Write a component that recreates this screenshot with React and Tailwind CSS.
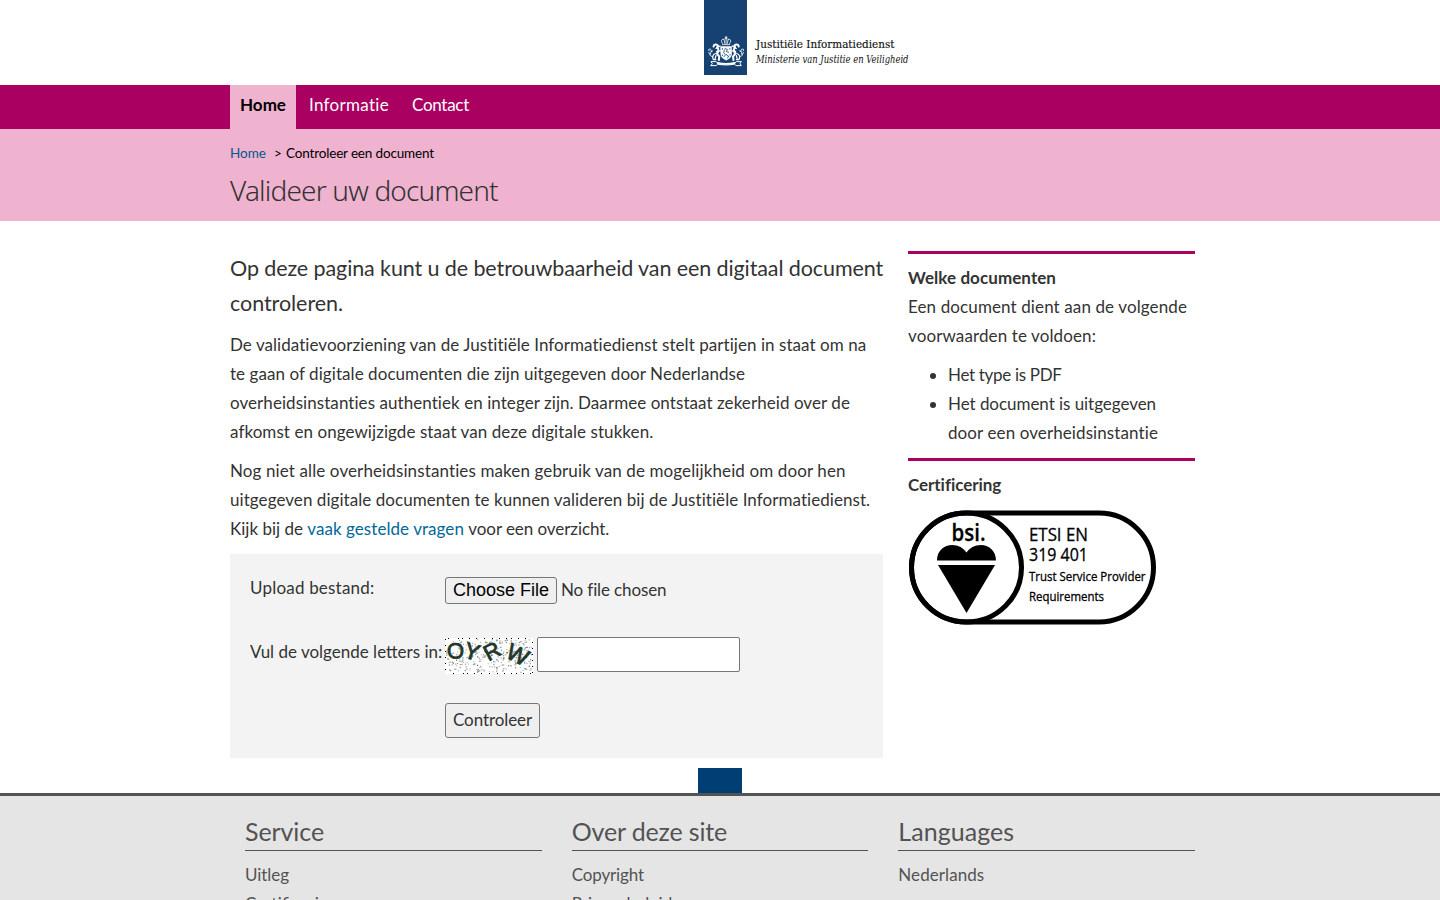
function Crest() {
  return (
    <g fill="none" stroke="#fff" strokeLinecap="round" strokeLinejoin="round">
      {/* crown */}
      <path d="M18.5 44.6h7.2M18.6 43.6c-2.6-3.2-.4-5 1.6-4.2 .2-1.2 3.4-1.2 3.7 0 2-.8 4.2 1 1.7 4.2M22.1 39v4.4M20.2 40l.6 3.4M24 40l-.6 3.4" strokeWidth=".8" />
      <path d="M22.1 36.4v2.2M21.2 37.3h1.8" strokeWidth=".8" />
      {/* shield */}
      <path d="M16.8 46.6h10.8v7.2c0 3.4-2.6 5-5.4 6.4-2.8-1.4-5.4-3-5.4-6.4z" fill="#fff" strokeWidth=".6" />
      <path d="M21 48.5l2.6 1-1.4 2 2.4.8M20.5 49.800l-.8 3 1.8 2-1.5 2M22.2 54.600l2.3 1.4-.8 2M18.4 48.4v1M25.8 48.4v.8M18.5 55v.6M26 54.5v.6" stroke="#154273" strokeWidth=".8" />
      {/* lions */}
      {[false, true].map((flip) => (
        <g key={String(flip)} transform={flip ? "translate(44.3 0) scale(-1 1)" : undefined}>
          <path d="M9.5 46.5c.4-2.4 3.4-2.5 4.5-.8l-.8 1.8c2 1.6 1.4 4.6-.4 5.8l2.5 3.4-.5 3.3" strokeWidth="2" />
          <path d="M12 48.5l4-2.6M12.6 51.4l3.8-.6M11.6 53.5c-3 .8-3.6 3.6-2.2 6.2h2.4M12 55.5l-1 3.5" strokeWidth="1.2" />
          <path d="M8.8 56.5c-2.6.2-3.6-2-2.2-3.8s.8-3-.4-3.6c-1.600-.6-2 1-1.100 1.900M6.800 54c-1 .3-1.900-.3-2-1.300M7.200 51.600l1.400-.7" strokeWidth=".9" />
        </g>
      ))}
      {/* ribbon */}
      <path d="M7 65.600h5.200l1.500-1.400c5.600 1 11.200 1 16.900 0l1.500 1.400h5.200l-1.300-2 1.300-2h-4.700l-1.500 1M7 65.600l1.300-2-1.300-2h4.700l1.500 1" strokeWidth="1" />
      <path d="M13.700 63c5.600 1.200 11.200 1.200 16.900 0" strokeWidth="1.800" />
    </g>
  );
}

function Logo() {
  return (
    <svg width="220" height="75" viewBox="0 0 220 75" aria-label="Justitiële Informatiedienst">
      <rect width="43" height="75" fill="#154273" />
      <Crest />
      <text x="52" y="48.300" textLength="138.500" lengthAdjust="spacingAndGlyphs" fill="#111" stroke="#111" strokeWidth=".15" className="font-['DejaVu_Serif',serif] text-[11.500px]">Justitiële Informatiedienst</text>
      <text x="52" y="63" textLength="152.500" lengthAdjust="spacingAndGlyphs" fill="#111" className="font-['DejaVu_Serif',serif] text-[11.500px] italic">Ministerie van Justitie en Veiligheid</text>
    </svg>
  );
}

function BsiMark() {
  const label = "font-['Open_Sans',sans-serif]";
  return (
    <svg width="249" height="115" viewBox="0 0 249 115" className="block">
      <g fill="none" stroke="#000" strokeWidth="5">
        <rect x="3.500" y="3" width="242" height="109" rx="54.500" />
        <ellipse cx="58.500" cy="57.500" rx="55" ry="54.500" />
      </g>
      <path d="M29 50.500c0-10 7.500-15.500 15-15.500 6.500 0 11.500 3 14.500 7.500C61.500 38 66.500 35 73 35c7.500 0 15 5.500 15 15.500z" />
      <path d="M30 55h57l-28.500 48z" />
      <g stroke="#000">
        <text x="43.500" y="31" textLength="34" lengthAdjust="spacingAndGlyphs" strokeWidth=".3" className="font-['Open_Sans',sans-serif] text-[24px] font-semibold">bsi.</text>
        <g strokeWidth=".3">
          <text x="121" y="31" textLength="59" lengthAdjust="spacingAndGlyphs" className={label + " text-[18px]"}>ETSI EN</text>
          <text x="121" y="50.500" textLength="59" lengthAdjust="spacingAndGlyphs" className={label + " text-[18px]"}>319 401</text>
          <text x="121" y="70.500" textLength="116.500" lengthAdjust="spacingAndGlyphs" className={label + " text-[12.500px]"}>Trust Service Provider</text>
          <text x="121" y="90.500" textLength="75" lengthAdjust="spacingAndGlyphs" className={label + " text-[12.500px]"}>Requirements</text>
        </g>
      </g>
    </svg>
  );
}

// Deterministic speckle for the captcha picture
const speckles = (() => {
  let seed = 71;
  const next = () => (seed = (seed * 16807) % 2147483647) / 2147483647;
  return Array.from({ length: 300 }, () => ({
    x: next() * 85 + 1,
    y: next() * 33 + 1,
    o: 0.25 + next() * 0.4,
  }));
})();
const edgeDots = [3, 13, 17, 24, 31, 39, 47, 54, 61, 66, 73, 80];

function Captcha() {
  return (
    <svg width="88" height="36" viewBox="0 0 88 36" className="block shrink-0">
      <rect width="88" height="36" fill="#fff" />
      {speckles.map((s, i) => (
        <rect key={i} x={s.x} y={s.y} width="1.200" height="1.200" fill="#26382b" opacity={s.o} />
      ))}
      <g shapeRendering="crispEdges">
        {edgeDots.map((x, i) => (
          <g key={x}>
            <rect x={x} y="0" width="1" height="1" />
            <rect x={(x + 5) % 88} y="35" width="1" height="1" />
            <rect x={i % 2 ? 87 : 0} y={i * 3 + 1} width="1" height="1" />
          </g>
        ))}
      </g>
      <g fill="#22372a" stroke="#22372a" strokeWidth=".8" className="font-['Liberation_Sans',sans-serif] text-[22px]">
        <text transform="translate(2.500 21) rotate(-4)">O</text>
        <text transform="translate(17.500 19) rotate(16)" className="text-[23px]">Y</text>
        <text transform="translate(43.500 23.500) rotate(-28)" className="text-[22px]">R</text>
        <text transform="translate(59.500 19) rotate(26)" className="text-[23px]">W</text>
      </g>
    </svg>
  );
}

function Line({ children, className = "" }) {
  return <span className={"block whitespace-nowrap " + className}>{children}</span>;
}

function FooterColumn({ title, titleClass, items }) {
  return (
    <section className="w-[296.660px]">
      <h2 className={"h-[35px] border-b border-[#535353] text-[25px] leading-[30px] whitespace-nowrap " + titleClass}>{title}</h2>
      <ul className="pt-[9px]">
        {items.map(([name, tracking]) => (
          <li key={name} className={tracking}>{name}</li>
        ))}
      </ul>
    </section>
  );
}

export default function App() {
  return (
    <div className="h-screen overflow-hidden bg-white font-['Lato','Noto_Sans',sans-serif] text-[17px] leading-[29px] text-[#333]">
      <header className="flex h-[85px] pl-[704px]">
        <Logo />
      </header>

      <nav className="h-[44px] bg-[#a90061] text-white">
        <ul className="flex h-full pl-[230px] leading-[39px]">
          <li className="w-[66px] bg-[#efb2cf] text-center font-bold text-black">Home</li>
          <li className="ml-[13px] w-[103px] tracking-[0.300px]">Informatie</li>
          <li className="tracking-[-0.280px]">Contact</li>
        </ul>
      </nav>

      <div className="h-[92px] bg-[#efb2cf] pl-[230px]">
        <div className="flex h-[40px] pt-[9px] text-[13.500px] leading-[30px] text-black">
          <a className="w-[44px] text-[#01588b]">Home</a>
          <span className="w-[12px]">&gt;</span>
          <span className="tracking-[-0.160px]">Controleer een document</span>
        </div>
        <h1 className="font-['Noto_Sans',sans-serif] text-[28px] leading-[42px] font-light tracking-[-0.830px]">Valideer uw document</h1>
      </div>

      <div className="flex h-[572px] gap-[25px] pt-[30px] pl-[230px]">
        <main className="w-[653px]">
          <p className="text-[21.500px] leading-[35px]">
            <Line className="tracking-[-0.100px]">Op deze pagina kunt u de betrouwbaarheid van een digitaal document</Line>
            <Line className="tracking-[-0.050px]">controleren.</Line>
          </p>
          <p className="mt-[9px]">
            <Line className="tracking-[0.055px]">De validatievoorziening van de Justitiële Informatiedienst stelt partijen in staat om na</Line>
            <Line className="tracking-[0.064px]">te gaan of digitale documenten die zijn uitgegeven door Nederlandse</Line>
            <Line className="tracking-[0.063px]">overheidsinstanties authentiek en integer zijn. Daarmee ontstaat zekerheid over de</Line>
            <Line className="tracking-[0.070px]">afkomst en ongewijzigde staat van deze digitale stukken.</Line>
          </p>
          <p className="mt-[10px]">
            <Line className="tracking-[0.116px]">Nog niet alle overheidsinstanties maken gebruik van de mogelijkheid om door hen</Line>
            <Line className="tracking-[0.060px]">uitgegeven digitale documenten te kunnen valideren bij de Justitiële Informatiedienst.</Line>
            <Line>
              Kijk bij de <a className="tracking-[0.060px] text-[#01689b]">vaak gestelde vragen</a>{" "}
              <span className="tracking-[-0.070px]">voor een overzicht.</span>
            </Line>
          </p>

          <form className="mt-[11px] h-[204px] bg-[#f3f3f3] pt-[19px] pl-[20px]">
            <div className="flex h-[64px]">
              <label className="w-[195px] tracking-[0.200px]">Upload bestand:</label>
              <button type="button" className="mt-[4px] h-[27px] w-[112px] rounded-[3px] border border-[#767676] bg-[#efefef] font-['Liberation_Sans',sans-serif] text-[18px] leading-[25px] whitespace-nowrap text-black">Choose File</button>
              <span className="ml-[4px] pt-[2px] tracking-[-0.130px]">No file chosen</span>
            </div>
            <div className="flex h-[66px]">
              <label className="w-[195px] whitespace-nowrap">Vul de volgende letters in:</label>
              <span className="mt-px"><Captcha /></span>
              <input type="text" className="ml-[4px] h-[35px] w-[203px] rounded-[2px] border border-[#767676] bg-white" />
            </div>
            <button type="button" className="ml-[195px] block h-[35px] w-[95px] rounded-[3px] border border-[#767676] bg-[#efefef] pb-[2px] leading-[31px] tracking-[-0.090px]">Controleer</button>
          </form>
        </main>

        <aside className="w-[287px]">
          <section className="h-[207px] border-t-3 border-[#a90061] pt-[9px]">
            <h2 className="font-bold tracking-[0.070px]">Welke documenten</h2>
            <p>
              <Line className="tracking-[0.113px]">Een document dient aan de volgende</Line>
              <Line className="tracking-[0.114px]">voorwaarden te voldoen:</Line>
            </p>
            <ul className="mt-[10px] list-disc pl-[40px]">
              <li className="tracking-[-0.320px]">Het type is PDF</li>
              <li>
                <Line className="tracking-[-0.047px]">Het document is uitgegeven</Line>
                <Line className="tracking-[0.100px]">door een overheidsinstantie</Line>
              </li>
            </ul>
          </section>
          <section className="border-t-3 border-[#a90061] pt-[9px]">
            <h2 className="mb-[11px] font-bold tracking-[-0.050px]">Certificering</h2>
            <BsiMark />
          </section>
        </aside>
      </div>

      <footer className="text-[#535353]">
        <div className="-mt-[25px] ml-[698px] h-[25px] w-[44px] bg-[#003e73]" />
        <div className="flex h-[220px] gap-[30px] border-t-3 border-[#535353] bg-[#e5e5e5] pt-[20px] pl-[245px]">
          <FooterColumn title="Service" titleClass="tracking-[-0.080px]" items={[["Uitleg", "tracking-[-0.055px]"], ["Certificering", "tracking-normal"]]} />
          <FooterColumn title="Over deze site" titleClass="tracking-[-0.140px]" items={[["Copyright", "tracking-[-0.130px]"], ["Privacybeleid", "tracking-[0.100px]"]]} />
          <FooterColumn title="Languages" titleClass="tracking-[0.060px]" items={[["Nederlands", "tracking-[0.078px]"]]} />
        </div>
      </footer>
    </div>
  );
}
